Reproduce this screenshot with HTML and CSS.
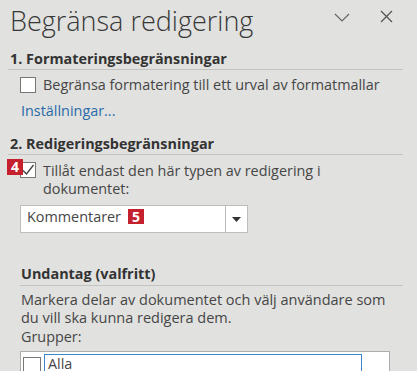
FILE: index.html
```html
<!DOCTYPE html>
<html lang="sv">
<head>
  <meta charset="UTF-8">
  <title>Begränsa redigering</title>
  <link rel="stylesheet" href="styles.css">
</head>
<body>
  <div class="pane">
    <div class="pane-head">
      <h1>Begränsa redigering</h1>
      <span class="head-btn btn-min">
        <svg width="16" height="9" viewBox="0 0 16 9"><path d="M1 1 L8 8 L15 1" fill="none" stroke="#666" stroke-width="1.2"/></svg>
      </span>
      <span class="head-btn btn-close">
        <svg width="13" height="13" viewBox="0 0 13 13"><path d="M1 1 L12 12 M12 1 L1 12" fill="none" stroke="#555" stroke-width="1.3"/></svg>
      </span>
    </div>

    <!-- 1. Formatering -->
    <h2 class="sec">1. Formateringsbegränsningar</h2>
    <div class="check-row first">
      <span class="box"></span>
      <span>Begränsa formatering till ett urval av formatmallar</span>
    </div>
    <a class="link">Inställningar...</a>

    <!-- 2. Redigering -->
    <h2 class="sec sec2">2. Redigeringsbegränsningar</h2>
    <div class="check-row second">
      <span class="badge badge-4">4</span>
      <span class="box">
        <svg width="14" height="14" viewBox="0 0 14 14"><path d="M2 7.5 L5.5 11 L12.5 2" fill="none" stroke="#444" stroke-width="1.4"/></svg>
      </span>
      <span>Tillåt endast den här typen av redigering i dokumentet:</span>
    </div>
    <div class="dropdown">
      <div class="dd-value">Kommentarer <span class="badge badge-5">5</span></div>
      <div class="dd-arrow">
        <svg width="9" height="5" viewBox="0 0 9 5"><path d="M0 0 H9 L4.5 5 Z" fill="#333"/></svg>
      </div>
    </div>

    <!-- Undantag -->
    <div class="sub">
      <h2 class="sec">Undantag (valfritt)</h2>
      <p class="desc">Markera delar av dokumentet och välj användare som du vill ska kunna redigera dem.</p>
      <p class="label">Grupper:</p>
      <div class="listbox">
        <div class="list-item">
          <span class="box"></span>
          <span class="item-text">Alla</span>
        </div>
      </div>
    </div>
  </div>
</body>
</html>
```

FILE: styles.css
```css
body {
  margin: 0;
  background: #e1e1df;
  font-family: "Open Sans", "Noto Sans", sans-serif;
  color: #464646;
  overflow: hidden;
}

.pane {
  padding: 0 14px 0 8px;
}

.pane-head {
  display: flex;
  align-items: flex-start;
  height: 50px;
  padding-right: 10px;
}

h1 {
  margin: 3px 0 0 2px;
  font-size: 27px;
  line-height: 36px;
  font-weight: 300;
  color: #383838;
}

.head-btn {
  display: flex;
}

.btn-min {
  margin: 13px 0 0 auto;
}

.btn-close {
  margin: 10px 0 0 30px;
}

.sec {
  margin: 0;
  font-size: 14.4px;
  line-height: 18px;
  font-weight: 700;
  color: #333;
  padding: 0 0 1px 2px;
  border-bottom: 1px solid #c3c3c1;
}

.sec2 {
  margin-top: 15px;
}

.check-row {
  display: flex;
  align-items: flex-start;
  gap: 7px;
  margin-left: 12px;
  padding-right: 8px;
  font-size: 14.4px;
  line-height: 18px;
  position: relative;
}

.check-row.first {
  margin-top: 5px;
  line-height: 20px;
}

.check-row.second {
  margin-top: 7px;
}

.box {
  flex: none;
  width: 14px;
  height: 14px;
  border: 1px solid #777;
  background: #fff;
  display: flex;
  align-items: center;
  justify-content: center;
}

.check-row.first .box {
  margin-top: 2px;
}

.link {
  display: block;
  margin: 7px 0 0 13px;
  font-size: 14.4px;
  line-height: 18px;
  color: #2a6aa8;
}

.badge {
  display: inline-block;
  width: 16px;
  height: 16px;
  background: #c4202d;
  color: #fff;
  font-weight: 700;
  font-size: 14px;
  line-height: 16px;
  text-align: center;
}

.badge-4 {
  position: absolute;
  left: -13px;
  top: -3px;
}

.badge-5 {
  height: 15px;
  line-height: 15px;
  margin-top: 1px;
}

.check-row .box svg {
  margin-left: -1px;
}

.dropdown {
  display: flex;
  margin: 7px 0 0 12px;
  width: 228px;
  height: 28px;
  border: 1px solid #bdbdbd;
  background: #fff;
  box-sizing: border-box;
}

.dd-value {
  flex: 1;
  display: flex;
  align-items: flex-start;
  gap: 7px;
  padding: 2px 0 0 6px;
  font-size: 14.4px;
  line-height: 18px;
}

.dd-arrow {
  width: 21px;
  border-left: 1px solid #bdbdbd;
  display: flex;
  align-items: center;
  justify-content: center;
}

.sub {
  margin: 32px 0 0 12px;
}

.sub .sec {
  padding: 0 0 2px 1px;
}

.desc {
  margin: 5px 0 0 1px;
  max-width: 372px;
  font-size: 14.5px;
  line-height: 18px;
}

.label {
  margin: 1px 0 0 1px;
  font-size: 14.4px;
  line-height: 18px;
}

.listbox {
  margin-top: 5px;
  width: 370px;
  height: 21px;
  border: 1px solid #adadad;
  border-bottom: 0;
  background: #fff;
  padding: 2px 2px 0;
  box-sizing: border-box;
  overflow: hidden;
}

.list-item {
  display: flex;
  gap: 3px;
  font-size: 14.4px;
}

.list-item .box {
  width: 16px;
  height: 16px;
  margin-top: 3px;
}

.item-text {
  width: 313px;
  border: 1px solid #3b84cf;
  border-bottom: 0;
  padding-left: 3px;
  line-height: 17px;
}
```
